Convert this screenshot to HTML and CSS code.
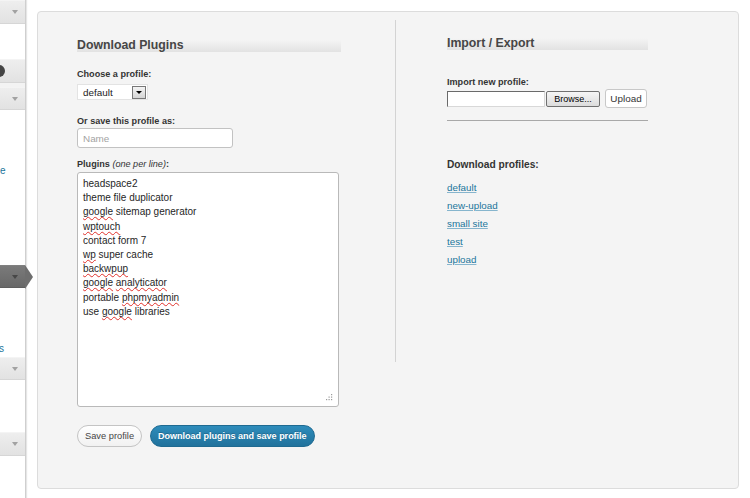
FILE: index.html
```html
<!DOCTYPE html>
<html lang="en">
<head>
    <meta charset="UTF-8">
    <meta name="viewport" content="width=device-width, initial-scale=1.0">
    <title>Plugin Profiles</title>
    <link rel="stylesheet" href="styles.css">
</head>
<body>
<div class="admin">
    <div class="sidebar">
        <div class="menu-top"><span class="arrow"></span></div>
        <div class="menu-top sep"><span class="bubble"></span></div>
        <div class="menu-strip"></div>
        <div class="menu-top short"><span class="arrow"></span></div>
        <div class="cut-link first">e</div>
        <div class="menu-top short current"><span class="arrow"></span></div>
        <div class="cut-link second">s</div>
        <div class="menu-top short near"><span class="arrow"></span></div>
        <div class="menu-top last"><span class="arrow"></span></div>
    </div>

    <div class="content">
        <div class="panel">
            <div class="col-left">
                <h3 class="section-title wide">Download Plugins</h3>

                <label class="field-label first">Choose a profile:</label>
                <div class="select">
                    <span>default</span>
                    <span class="select-btn"><span class="caret"></span></span>
                </div>

                <label class="field-label">Or save this profile as:</label>
                <input class="name-input" type="text" placeholder="Name">

                <label class="field-label plugins">Plugins <em>(one per line)</em>:</label>
                <div class="plugin-list">
                    <div>headspace2</div>
                    <div>theme file duplicator</div>
                    <div><span class="typo">google</span> sitemap generator</div>
                    <div><span class="typo">wptouch</span></div>
                    <div>contact form 7</div>
                    <div><span class="typo">wp</span> super cache</div>
                    <div><span class="typo">backwpup</span></div>
                    <div><span class="typo">google</span> <span class="typo">analyticator</span></div>
                    <div>portable <span class="typo">phpmyadmin</span></div>
                    <div>use <span class="typo">google</span> libraries</div>
                    <svg class="grip" width="7" height="7" viewBox="0 0 7 7">
                        <rect x="5" y="0" width="1.2" height="1.2" fill="#9a9a9a"/>
                        <rect x="2.5" y="2.5" width="1.2" height="1.2" fill="#9a9a9a"/>
                        <rect x="5" y="2.5" width="1.2" height="1.2" fill="#9a9a9a"/>
                        <rect x="0" y="5" width="1.2" height="1.2" fill="#9a9a9a"/>
                        <rect x="2.5" y="5" width="1.2" height="1.2" fill="#9a9a9a"/>
                        <rect x="5" y="5" width="1.2" height="1.2" fill="#9a9a9a"/>
                    </svg>
                </div>

                <div class="actions">
                    <button class="btn btn-secondary" type="button">Save profile</button>
                    <button class="btn btn-primary" type="button">Download plugins and save profile</button>
                </div>
            </div>

            <div class="col-right">
                <h3 class="section-title">Import / Export</h3>

                <label class="field-label import">Import new profile:</label>
                <div class="file-row">
                    <span class="file-name"></span>
                    <button class="browse" type="button">Browse...</button>
                    <button class="upload" type="button">Upload</button>
                </div>
                <hr class="divider">

                <h4 class="profiles-title">Download profiles:</h4>
                <div class="profile-links">
                    <a href="#">default</a>
                    <a href="#">new-upload</a>
                    <a href="#">small site</a>
                    <a href="#">test</a>
                    <a href="#">upload</a>
                </div>
            </div>
        </div>
    </div>
</div>
</body>
</html>
```

FILE: styles.css
```css
* { box-sizing:border-box; }
body { margin:0; font-family:"Liberation Sans", Arial, sans-serif; color:#333; background:#fff; }
.admin { display:flex; height:498px; overflow:hidden; }

/* admin menu, only its right edge is visible */
.sidebar { width:26px; flex:none; display:flex; flex-direction:column; background:#fff; border-right:1px solid #cfcfcf; box-shadow:1px 0 1px #e6e6e6; position:relative; z-index:1; }
.menu-top { height:24px; flex:none; display:flex; align-items:center; background:linear-gradient(#eeeeee,#e2e2e2); border-top:1px solid #f4f4f4; border-bottom:1px solid #d6d6d6; position:relative; }
.menu-top.short { height:23px; }
.menu-top.sep { margin-top:35px; }
.menu-top.near { margin-top:2px; }
.menu-top.last { margin-top:52px; }
.menu-strip { height:4px; flex:none; background:#f3f3f3; }
.arrow { margin-left:12px; width:0; height:0; border-left:3px solid transparent; border-right:3px solid transparent; border-top:4px solid #a2a2a2; }
.bubble { width:12px; height:12px; border-radius:50%; background:#444; margin-left:-7px; }
.menu-top.current { background:linear-gradient(#7a7a7a,#686868); border-top-color:#808080; border-bottom-color:#5e5e5e; }
.menu-top.current .arrow { border-top-color:#474747; }
.menu-top.current::after { content:""; position:absolute; right:-8px; top:-1px; border-top:12px solid transparent; border-bottom:12px solid transparent; border-left:8px solid #6e6e6e; }
.cut-link { font-size:10px; line-height:12px; color:#21759b; }
.cut-link.first { margin:55px 0 88px; }
.cut-link.second { margin-top:55px; margin-left:-1px; }

/* main panel */
.content { flex:1; padding:11px 11px 10px; }
.panel { height:478px; display:flex; padding:8px 0 0 39px; background:#f4f4f4; border:1px solid #dcdcdc; border-radius:4px; }
.col-left { width:318px; padding-top:20px; }
.col-right { width:253px; height:342px; padding:18px 0 0 51px; border-left:1px solid #d3d3d3; }

.section-title { margin:0; height:12px; font-size:12.3px; line-height:11px; font-weight:bold; color:#464646; background:linear-gradient(rgba(244,244,244,0), #e2e2e2); }
.section-title.wide { width:264px; }

.field-label { display:block; margin-top:15px; font-size:9.1px; line-height:12px; font-weight:bold; color:#333; }
.field-label.first { margin-top:16px; }
.field-label.plugins { margin-top:10px; }
.field-label em { font-weight:normal; }
.field-label.import { margin-top:26px; }

.select { display:flex; align-items:center; justify-content:space-between; width:71px; height:16px; margin-top:4px; padding-left:5px; background:#fff; border:1px solid #e3e3e3; font-size:9.9px; color:#222; }
.select-btn { display:flex; align-items:center; justify-content:center; width:14px; height:13px; margin-right:1px; border:1px solid #777; background:linear-gradient(#f4f4f4,#d4d4d4); }
.caret { width:0; height:0; border-left:3px solid transparent; border-right:3px solid transparent; border-top:3px solid #000; }

.name-input { display:block; width:156px; height:20px; margin-top:1px; padding:0 5px; border:1px solid #c2c2c2; border-radius:3px; background:#fff; font-family:inherit; font-size:9.9px; }
.name-input::placeholder { color:#a3a3a3; }

.plugin-list { position:relative; width:262px; height:235px; margin-top:2px; padding:4px 5px; background:#fff; border:1px solid #b9b9b9; border-radius:3px; font-size:10px; line-height:14.2px; color:#262626; }
.typo { text-decoration:underline wavy #e0302a; text-decoration-thickness:0.5px; text-underline-offset:1px; text-decoration-skip-ink:none; }
.grip { position:absolute; right:5px; bottom:5px; }

.actions { display:flex; gap:8px; margin-top:18px; }
.btn { height:22px; padding:0 7px; border-radius:11px; font-family:inherit; cursor:pointer; }
.btn-secondary { font-size:9.3px; color:#464646; background:linear-gradient(#ffffff,#f1f1f1); border:1px solid #c4c4c4; }
.btn-primary { font-size:9px; font-weight:bold; color:#fff; background:linear-gradient(#2e8cbb,#21729c); border:1px solid #1f6a91; text-shadow:0 -1px 0 rgba(0,0,0,0.2); }

.file-row { display:flex; align-items:center; height:19px; margin-top:1px; }
.file-name { width:98px; height:16px; background:#fff; border:1px solid; border-color:#6a6a6a #d8d8d8 #d8d8d8 #6a6a6a; }
.browse { width:54px; height:16px; margin-left:1px; padding:0; border:1px solid #707070; border-radius:2px; background:linear-gradient(#f6f6f6,#dcdcdc); font-family:inherit; font-size:9px; color:#000; }
.upload { width:42px; height:19px; margin-left:5px; padding:0; border:1px solid #c8c8c8; border-radius:3px; background:#fff; font-family:inherit; font-size:9.9px; color:#333; }
.divider { width:201px; margin:12px 0 0; border:0; border-top:1px solid #a8a8a8; }

.profiles-title { margin:37px 0 0; font-size:10.2px; line-height:13px; font-weight:bold; color:#333; }
.profile-links { margin-top:11px; }
.profile-links a { display:block; margin-bottom:6px; font-size:9.8px; line-height:12px; color:#21759b; text-decoration-color:#86b5cd; }
```
